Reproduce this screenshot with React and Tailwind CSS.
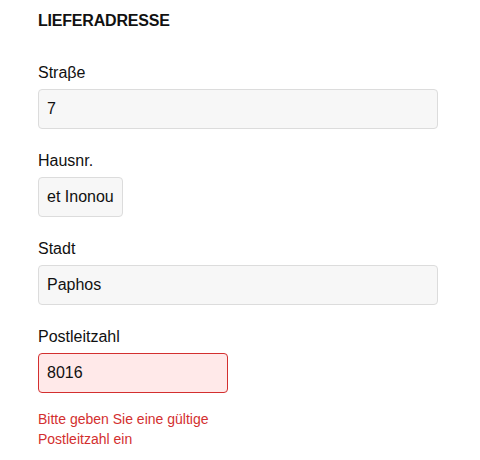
export default function App() {
  const font = { fontFamily: '"Liberation Sans", Arial, sans-serif' };
  const inputCls =
    "h-10 rounded-[4px] border border-[#dcdcdc] bg-[#f7f7f7] px-[8px] text-[16px] text-[#111] outline-none";
  return (
    <div className="w-[480px] h-[460px] bg-white pl-[38px] pt-[9px] text-[#111]" style={font}>
      <h2 className="text-[16px] leading-6 font-bold tracking-[-0.2px]">LIEFERADRESSE</h2>
      <div className="mt-[28px] flex flex-col gap-[20px]">
        <div className="flex flex-col gap-1">
          <label className="text-[16px] leading-6">Straβe</label>
          <input className={inputCls + " w-[400px]"} defaultValue="7" />
        </div>
        <div className="flex flex-col gap-1">
          <label className="text-[16px] leading-6">Hausnr.</label>
          <input className={inputCls + " w-[85px]"} defaultValue="et Inonou" />
        </div>
        <div className="flex flex-col gap-1">
          <label className="text-[16px] leading-6">Stadt</label>
          <input className={inputCls + " w-[400px]"} defaultValue="Paphos" />
        </div>
        <div className="flex flex-col gap-1">
          <label className="text-[16px] leading-6">Postleitzahl</label>
          <input
            className="h-10 w-[190px] rounded-[4px] border border-[#d32f2f] bg-[#ffe9e9] px-[8px] text-[16px] text-[#111] outline-none"
            defaultValue="8016"
          />
          <p className="mt-[12px] w-[190px] text-[14px] leading-[20px] text-[#d32f2f]">
            Bitte geben Sie eine gültige Postleitzahl ein
          </p>
        </div>
      </div>
    </div>
  );
}
